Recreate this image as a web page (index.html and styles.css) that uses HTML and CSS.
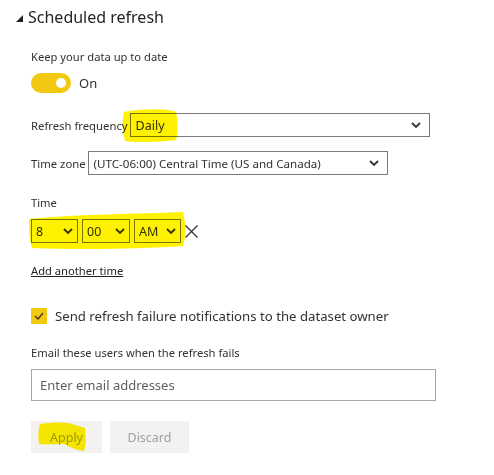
FILE: index.html
```html
<!DOCTYPE html>
<html lang="en">
<head>
    <meta charset="UTF-8">
    <title>Scheduled refresh</title>
    <link rel="stylesheet" href="styles.css">
</head>
<body>
<div class="panel">
    <h2 class="section-title"><span class="caret"></span>Scheduled refresh</h2>

    <div class="body">
        <p class="label keep">Keep your data up to date</p>
        <div class="toggle-row">
            <span class="toggle"><span class="knob"></span></span>
            <span class="toggle-text">On</span>
        </div>

        <div class="row freq-row">
            <span class="row-label">Refresh frequency</span>
            <div class="select freq">
                <span>Daily</span>
                <svg class="chev" width="10" height="6" viewBox="0 0 10 6"><path d="M1 1 L5 5 L9 1" fill="none" stroke="#333" stroke-width="1.8"/></svg>
            </div>
        </div>

        <div class="row tz-row">
            <span class="row-label">Time zone</span>
            <div class="select tz">
                <span>(UTC-06:00) Central Time (US and Canada)</span>
                <svg class="chev" width="10" height="6" viewBox="0 0 10 6"><path d="M1 1 L5 5 L9 1" fill="none" stroke="#333" stroke-width="1.8"/></svg>
            </div>
        </div>

        <p class="label time-label">Time</p>
        <div class="row time-row">
            <div class="select small hour">
                <span>8</span>
                <svg class="chev" width="10" height="6" viewBox="0 0 10 6"><path d="M1 1 L5 5 L9 1" fill="none" stroke="#333" stroke-width="1.8"/></svg>
            </div>
            <div class="select small minute">
                <span>00</span>
                <svg class="chev" width="10" height="6" viewBox="0 0 10 6"><path d="M1 1 L5 5 L9 1" fill="none" stroke="#333" stroke-width="1.8"/></svg>
            </div>
            <div class="select small ampm">
                <span>AM</span>
                <svg class="chev" width="10" height="6" viewBox="0 0 10 6"><path d="M1 1 L5 5 L9 1" fill="none" stroke="#333" stroke-width="1.8"/></svg>
            </div>
            <svg class="remove" width="13" height="13" viewBox="0 0 13 13"><path d="M0.5 0.5 L12.5 12.5 M12.5 0.5 L0.5 12.5" stroke="#333" stroke-width="1.3"/></svg>
        </div>

        <a class="add-time" href="#">Add another time</a>

        <div class="check-row">
            <span class="checkbox">
                <svg width="10" height="8" viewBox="0 0 10 8"><path d="M1 4 L4 7 L9 1" fill="none" stroke="#333" stroke-width="1.3"/></svg>
            </span>
            <span class="check-text">Send refresh failure notifications to the dataset owner</span>
        </div>

        <p class="label email-label">Email these users when the refresh fails</p>
        <div class="text-input">Enter email addresses</div>

        <div class="buttons">
            <span class="btn apply">Apply</span>
            <span class="btn discard">Discard</span>
        </div>
    </div>

    <!-- highlighter marks drawn over the form -->
    <svg class="marker" width="494" height="475" viewBox="0 0 494 475">
        <path d="M124 112 C140 109 165 108 176 112 C178 122 178 134 176 140 C160 142 135 143 125 141 C122 130 122 120 124 112 Z" fill="#fff200"/>
        <path d="M29 219 C80 214 140 214 183 212 C186 224 186 236 183 246 C140 249 80 250 32 248 C29 238 29 228 29 219 Z" fill="#fff200"/>
        <path d="M40 424 C55 422 65 422 72 424 L85 428 C86 438 86 446 84 451 C75 450 70 447 64 444 C55 444 45 445 39 444 C38 436 38 430 40 424 Z" fill="#fff200"/>
    </svg>
</div>
</body>
</html>
```

FILE: styles.css
```css
body {
    margin: 0;
    font-family: "Noto Sans", "Open Sans", sans-serif;
    color: #323130;
    background-color: #ffffff;
}

.panel {
    position: relative;
    width: 494px;
    height: 475px;
    overflow: hidden;
}

.section-title {
    margin: 0;
    height: 34px;
    display: flex;
    align-items: center;
    padding-left: 16px;
    font-size: 16px;
    font-weight: normal;
    color: #252423;
}

.caret {
    width: 0;
    height: 0;
    border-left: 7px solid transparent;
    border-bottom: 7px solid #252423;
    margin-right: 5px;
    margin-top: 3px;
}

.body {
    padding-left: 31px;
}

.label {
    margin: 0;
    height: 18px;
    line-height: 18px;
    font-size: 11.2px;
}

.keep {
    margin-top: 14px;
}

.toggle-row {
    margin-top: 7px;
    height: 20px;
    display: flex;
    align-items: center;
}

.toggle {
    width: 40px;
    height: 20px;
    border-radius: 10px;
    background-color: #f2c811;
    display: flex;
    align-items: center;
    justify-content: flex-end;
    padding-right: 5px;
    box-sizing: border-box;
}

.knob {
    width: 10px;
    height: 10px;
    border-radius: 50%;
    background-color: #ffffff;
}

.toggle-text {
    margin-left: 8px;
    font-size: 13px;
}

.row {
    display: flex;
    align-items: center;
    height: 24px;
}

.row-label {
    font-size: 11.3px;
    margin-right: 2px;
}

.freq-row {
    margin-top: 20px;
}

.tz-row {
    margin-top: 14px;
}

.select {
    height: 24px;
    box-sizing: border-box;
    border: 1px solid #7a7a7a;
    display: flex;
    align-items: center;
    justify-content: space-between;
    padding: 0 8px 0 5px;
    font-size: 12.5px;
    color: #323130;
}

.freq {
    width: 300px;
}

.tz {
    width: 300px;
    font-size: 11.6px;
}

.time-label {
    margin-top: 19px;
}

.time-row {
    margin-top: 7px;
}

.small {
    width: 47px;
    margin-right: 4px;
    padding-left: 4px;
    padding-right: 4px;
}

.minute {
    width: 48px;
    margin-right: 4px;
}

.ampm {
    width: 47px;
    margin-right: 0;
}

.remove {
    margin-left: 4px;
}

.add-time {
    display: block;
    margin-top: 19px;
    height: 18px;
    line-height: 18px;
    font-size: 11.2px;
    color: #252423;
    text-decoration: underline;
    width: max-content;
}

.check-row {
    margin-top: 28px;
    height: 16px;
    display: flex;
    align-items: center;
}

.checkbox {
    width: 16px;
    height: 16px;
    background-color: #f2c811;
    display: flex;
    align-items: center;
    justify-content: center;
}

.check-text {
    margin-left: 8px;
    font-size: 13.2px;
}

.email-label {
    margin-top: 20px;
}

.text-input {
    margin-top: 7px;
    width: 405px;
    height: 32px;
    box-sizing: border-box;
    border: 1px solid #a6a6a6;
    padding-left: 8px;
    display: flex;
    align-items: center;
    font-size: 13px;
    color: #605e5c;
}

.buttons {
    margin-top: 20px;
    display: flex;
    gap: 8px;
}

.btn {
    height: 32px;
    display: flex;
    align-items: center;
    justify-content: center;
    background-color: #f3f2f1;
    color: #a19f9d;
    font-size: 12.5px;
}

.apply {
    width: 71px;
}

.discard {
    width: 79px;
}

.marker {
    position: absolute;
    left: 0;
    top: 0;
    mix-blend-mode: multiply;
    pointer-events: none;
}
```
